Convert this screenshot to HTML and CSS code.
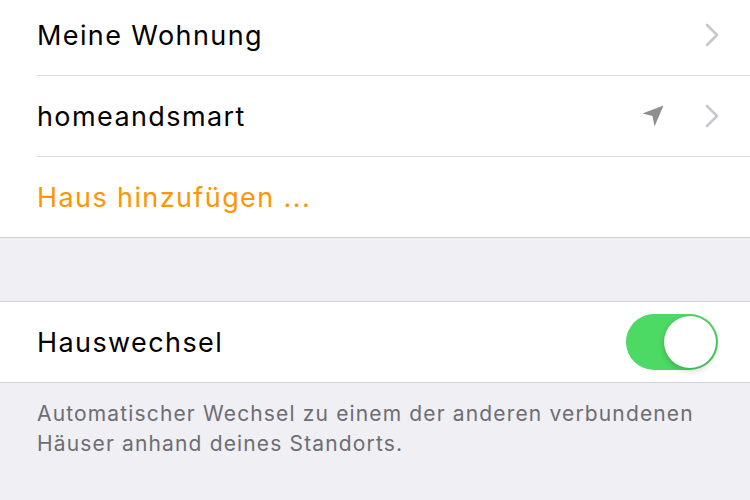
FILE: index.html
```html
<!DOCTYPE html>
<html lang="de">
<head>
<meta charset="utf-8">
<title>Häuser</title>
<link rel="stylesheet" href="styles.css">
</head>
<body>
<main class="page">
  <section class="group">
    <div class="row">
      <span class="label">Meine Wohnung</span>
      <span class="accessories">
        <svg class="chevron" viewBox="0 0 14 24" width="14" height="24"><path d="M2 2 L12 12 L2 22" fill="none" stroke="#c7c7cc" stroke-width="2.6" stroke-linecap="round" stroke-linejoin="round"/></svg>
      </span>
    </div>
    <div class="row">
      <span class="label">homeandsmart</span>
      <span class="accessories">
        <svg class="location" viewBox="0 0 22 22" width="22" height="22"><path d="M21.5 0.5 L0.5 8.5 L10.5 11 L12.5 21.5 Z" fill="#8e8e93"/></svg>
        <svg class="chevron" viewBox="0 0 14 24" width="14" height="24"><path d="M2 2 L12 12 L2 22" fill="none" stroke="#c7c7cc" stroke-width="2.6" stroke-linecap="round" stroke-linejoin="round"/></svg>
      </span>
    </div>
    <div class="row row-last">
      <span class="label label-action">Haus hinzufügen ...</span>
    </div>
  </section>

  <section class="group">
    <div class="row row-last">
      <span class="label">Hauswechsel</span>
      <span class="switch is-on"><span class="knob"></span></span>
    </div>
  </section>
  <p class="footer">Automatischer Wechsel zu einem der anderen verbundenen Häuser anhand deines Standorts.</p>
</main>
</body>
</html>
```
FILE: styles.css
```css
html, body {
  margin: 0;
  padding: 0;
  background: #efeff4;
}

body {
  font-family: "Inter", "Liberation Sans", sans-serif;
  -webkit-font-smoothing: antialiased;
  overflow: hidden;
}

.page {
  margin-top: -5px;
}

.group {
  background: #ffffff;
  border-bottom: 1px solid #d1d1d6;
}

.group + .group {
  margin-top: 63px;
  border-top: 1px solid #d1d1d6;
}

.row {
  height: 80px;
  margin-left: 37px;
  padding-right: 31px;
  display: flex;
  align-items: center;
  justify-content: space-between;
  border-bottom: 1px solid #dcdce0;
}

.row-last {
  border-bottom: none;
}

.label {
  font-size: 27px;
  color: #000000;
  letter-spacing: 1.4px;
}

.label-action {
  color: #ff9500;
}

.accessories {
  display: flex;
  align-items: center;
  gap: 41px;
}

.chevron,
.location {
  display: block;
}

.switch {
  position: relative;
  width: 92px;
  height: 56px;
  border-radius: 28px;
  background: #4cd964;
  margin-right: 1px;
}

.knob {
  position: absolute;
  top: 2px;
  right: 2px;
  width: 52px;
  height: 52px;
  border-radius: 50%;
  background: #ffffff;
  box-shadow: 0 3px 6px rgba(0, 0, 0, 0.18), 0 0 1px rgba(0, 0, 0, 0.2);
}

.footer {
  margin: 0;
  padding: 16px 37px 0 37px;
  font-size: 21px;
  line-height: 30px;
  letter-spacing: 1.15px;
  color: #6d6d72;
}
```
